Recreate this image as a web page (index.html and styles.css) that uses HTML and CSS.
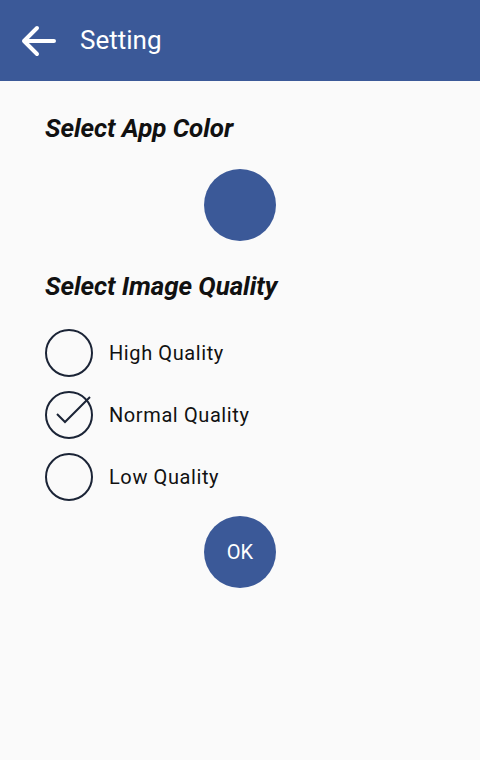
FILE: index.html
```html
<!DOCTYPE html>
<html>
<head>
<meta charset="utf-8">
<link rel="stylesheet" href="styles.css">
</head>
<body>
<header class="toolbar">
  <svg class="back" width="40" height="40" viewBox="0 0 40 40">
    <path d="M36 20H6M19 7L6 20l13 13" fill="none" stroke="#fff" stroke-width="4" stroke-linecap="round" stroke-linejoin="round"/>
  </svg>
  <span class="title">Setting</span>
</header>
<main class="content">
  <h2 class="heading first">Select App Color</h2>
  <div class="swatch-row"><div class="swatch"></div></div>
  <h2 class="heading second">Select Image Quality</h2>
  <div class="options">
    <div class="option">
      <svg class="radio" width="50" height="50" viewBox="0 0 50 50"><circle cx="24" cy="25" r="23" fill="none" stroke="#1b2436" stroke-width="2"/></svg>
      <span class="label">High Quality</span>
    </div>
    <div class="option">
      <svg class="radio" width="50" height="50" viewBox="0 0 50 50"><circle cx="24" cy="25" r="23" fill="none" stroke="#1b2436" stroke-width="2"/><path d="M12 24l8 8L45 7" fill="none" stroke="#1b2436" stroke-width="2"/></svg>
      <span class="label">Normal Quality</span>
    </div>
    <div class="option">
      <svg class="radio" width="50" height="50" viewBox="0 0 50 50"><circle cx="24" cy="25" r="23" fill="none" stroke="#1b2436" stroke-width="2"/></svg>
      <span class="label">Low Quality</span>
    </div>
  </div>
  <div class="ok-row"><button class="ok">OK</button></div>
</main>
</body>
</html>
```
FILE: styles.css
```css
html, body {
  margin: 0;
  padding: 0;
}
body {
  background: #fafafa;
  font-family: Roboto, "Noto Sans", sans-serif;
  width: 480px;
  height: 760px;
  overflow: hidden;
}
.toolbar {
  height: 81px;
  background: #3b5998;
  display: flex;
  align-items: center;
  box-sizing: border-box;
  padding-left: 18px;
}
.back {
  display: block;
}
.title {
  color: #fff;
  font-size: 26px;
  margin-left: 22px;
  margin-top: -2px;
}
.content {
  padding: 0 45px;
}
.heading {
  margin: 0;
  font-size: 26px;
  font-weight: bold;
  font-style: italic;
  color: #111;
  line-height: 30px;
  letter-spacing: -0.1px;
}
.heading.first {
  padding-top: 32px;
}
.swatch-row {
  display: flex;
  justify-content: center;
  padding-top: 26px;
  margin-left: -45px;
  margin-right: -45px;
}
.swatch {
  width: 72px;
  height: 72px;
  border-radius: 50%;
  background: #3b5998;
}
.heading.second {
  padding-top: 30px;
}
.options {
  display: flex;
  flex-direction: column;
  gap: 12px;
  padding-top: 27px;
}
.option {
  display: flex;
  align-items: center;
  height: 50px;
}
.radio {
  display: block;
  flex: none;
}
.label {
  font-size: 20px;
  color: #111;
  margin-left: 14px;
  letter-spacing: 0.6px;
}
.ok-row {
  display: flex;
  justify-content: center;
  padding-top: 14px;
  margin-left: -45px;
  margin-right: -45px;
}
.ok {
  width: 72px;
  height: 72px;
  border-radius: 50%;
  border: none;
  background: #3b5998;
  color: #fff;
  font-family: Roboto, "Noto Sans", sans-serif;
  font-size: 20px;
  padding: 0;
}
```
